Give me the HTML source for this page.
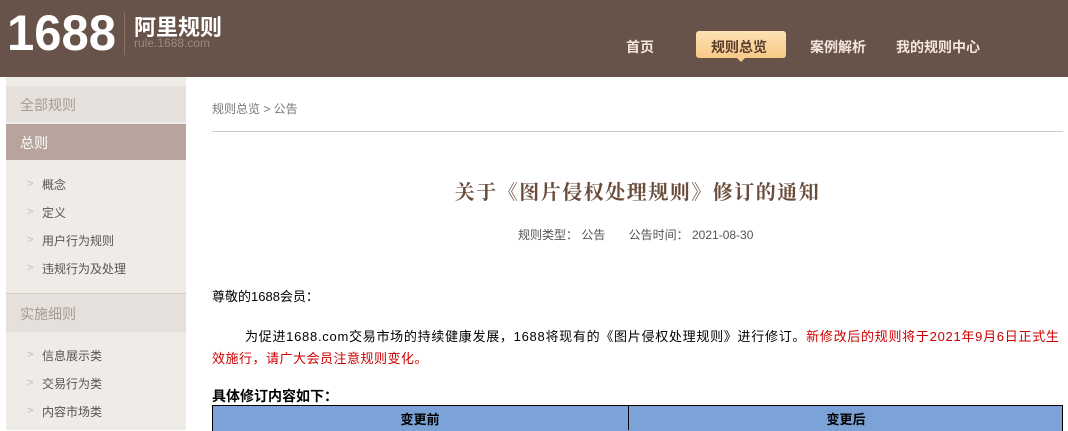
<!DOCTYPE html><html><head><meta charset="utf-8"><style>
body{margin:0;width:1068px;height:430px;overflow:hidden;background:#fff;font-family:"Liberation Sans","Noto Sans CJK SC",sans-serif;position:relative}
.a{position:absolute;white-space:nowrap}
#hd{position:absolute;left:0;top:0;width:1068px;height:77px;background:#67534a}
.nav{font-size:14px;font-weight:bold;color:#f3e6dc;top:37px}
.sb{position:absolute;left:6px;width:180px}
.it{font-size:12px;color:#555;left:42px}
.ar{font-size:11px;color:#bbb;left:27px}
</style></head><body>
<div id="hd"></div>
<div class="a" style="left:7px;top:4px;font-size:50px;font-weight:bold;color:#fff;letter-spacing:0px;transform:scaleX(0.98);transform-origin:left">1688</div>
<div class="a" style="left:124px;top:13px;width:1px;height:42px;background:#8a7568"></div>
<div class="a" style="left:134px;top:10px;font-size:22px;font-weight:bold;color:#fff">阿里规则</div>
<div class="a" style="left:134px;top:36px;font-size:12px;color:#9b8a80">rule.1688.com</div>
<div class="a nav" style="left:626px">首页</div>
<div class="a" style="left:696px;top:31px;width:90px;height:27px;border-radius:3px;background:linear-gradient(#fde2b5,#f8c987)"></div>
<div class="a" style="left:736px;top:57px;width:0;height:0;border:5px solid transparent;border-top-color:#f8c987"></div>
<div class="a nav" style="left:711px;color:#5a3e2e">规则总览</div>
<div class="a nav" style="left:810px">案例解析</div>
<div class="a nav" style="left:896px">我的规则中心</div>
<div class="sb" style="top:77px;height:353px;background:#efebe7"></div>
<div class="sb" style="top:86px;height:36px;background:#e5e0db"></div>
<div class="a" style="left:20px;top:95px;font-size:14px;color:#a89a92">全部规则</div>
<div class="sb" style="top:124px;height:36px;background:#b8a49c"></div>
<div class="a" style="left:20px;top:133px;font-size:14px;color:#fff">总则</div>
<div class="a ar" style="top:178px">&gt;</div><div class="a it" style="top:176px">概念</div>
<div class="a ar" style="top:206px">&gt;</div><div class="a it" style="top:204px">定义</div>
<div class="a ar" style="top:234px">&gt;</div><div class="a it" style="top:232px">用户行为规则</div>
<div class="a ar" style="top:262px">&gt;</div><div class="a it" style="top:260px">违规行为及处理</div>
<div class="sb" style="top:293px;height:1px;background:#d6ccc5"></div>
<div class="sb" style="top:294px;height:38px;background:#e5e0db"></div>
<div class="a" style="left:20px;top:304px;font-size:14px;color:#a89a92">实施细则</div>
<div class="a ar" style="top:349px">&gt;</div><div class="a it" style="top:347px">信息展示类</div>
<div class="a ar" style="top:377px">&gt;</div><div class="a it" style="top:375px">交易行为类</div>
<div class="a ar" style="top:405px">&gt;</div><div class="a it" style="top:403px">内容市场类</div>
<div class="a" style="left:212px;top:100px;font-size:12px;color:#777">规则总览 &gt; 公告</div>
<div class="a" style="left:212px;top:131px;width:851px;height:1px;background:#ccc"></div>
<div class="a" style="left:212px;width:851px;top:176px;text-align:center;font-size:20px;letter-spacing:1.5px;font-weight:bold;color:#6b4c3b;font-family:'Liberation Serif','Noto Serif CJK SC',serif">关于《图片侵权处理规则》修订的通知</div>
<div class="a" style="left:518px;top:226px;font-size:12px;color:#555">规则类型： 公告&nbsp;&nbsp;&nbsp;&nbsp;&nbsp;&nbsp;&nbsp;公告时间： 2021-08-30</div>
<div class="a" style="left:212px;top:286px;font-size:13px;color:#000">尊敬的1688会员：</div>
<div class="a" style="left:245px;top:326px;font-size:13px;color:#000;line-height:22px;letter-spacing:0.72px">为促进1688.com交易市场的持续健康发展，1688将现有的《图片侵权处理规则》进行修订。<span style="color:#c00">新修改后的规则将于2021年9月6日正式生</span></div>
<div class="a" style="left:212px;top:348px;font-size:13px;color:#c00;line-height:22px;letter-spacing:0.5px">效施行，请广大会员注意规则变化。</div>
<div class="a" style="left:212px;top:386px;font-size:14px;font-weight:bold;color:#000">具体修订内容如下：</div>
<div class="a" style="left:212px;top:405px;width:849px;height:25px;background:#7ba3d8;border:1px solid #000;border-bottom:none"></div>
<div class="a" style="left:628px;top:405px;width:1px;height:25px;background:#000"></div>
<div class="a" style="left:212px;width:416px;top:409px;text-align:center;font-size:13px;font-weight:bold">变更前</div>
<div class="a" style="left:629px;width:434px;top:409px;text-align:center;font-size:13px;font-weight:bold">变更后</div>
</body></html>
